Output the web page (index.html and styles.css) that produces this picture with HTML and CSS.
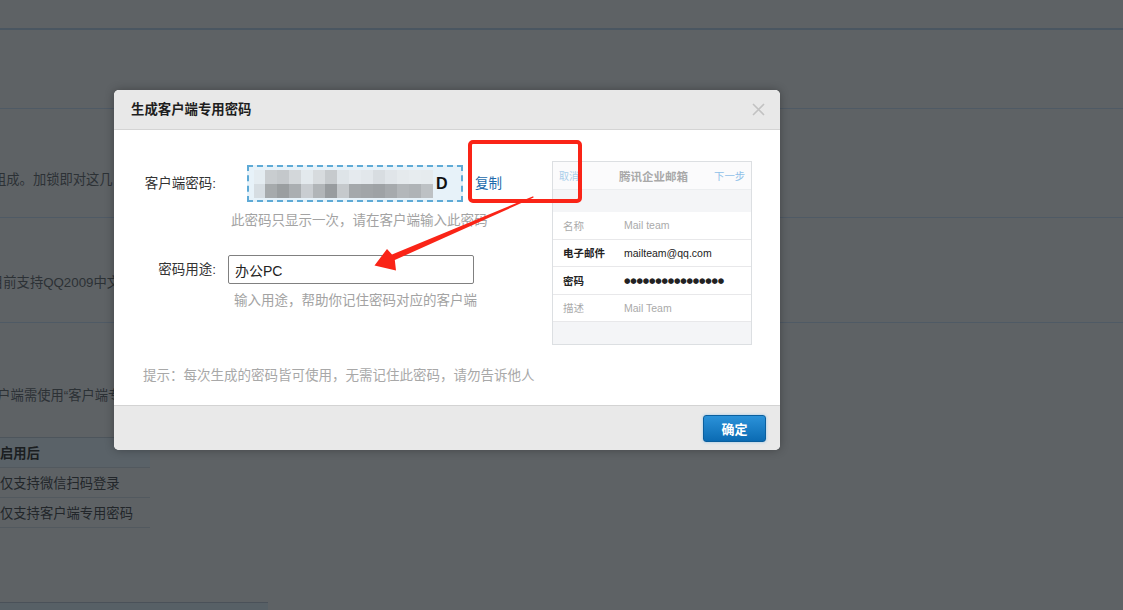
FILE: index.html
```html
<!DOCTYPE html>
<html lang="zh-CN">
<head>
<meta charset="utf-8">
<title>生成客户端专用密码</title>
<link rel="stylesheet" href="styles.css">
</head>
<body>
<div class="page">
  <div class="topbar"></div>
  <section class="sec sec1"></section>
  <section class="sec sec2"><p class="bgtext t1">组成。加锁即对这几</p></section>
  <section class="sec sec3"><p class="bgtext t2">目前支持QQ2009中文</p></section>
  <section class="sec4">
    <p class="bgtext t3">客户端需使用“客户端专</p>
    <div class="tbl">
      <div class="tr th">启用后</div>
      <div class="tr">仅支持微信扫码登录</div>
      <div class="tr">仅支持客户端专用密码</div>
    </div>
    <div class="pagebar"></div>
  </section>
</div>

<div class="dialog">
  <div class="dlg-head">
    <span class="dlg-title">生成客户端专用密码</span>
    <svg class="dlg-close" width="13" height="13" viewBox="0 0 13 13"><path d="M1 1L12 12M12 1L1 12" stroke="#c2c2c2" stroke-width="1.6" fill="none"/></svg>
  </div>
  <div class="dlg-body">
    <div class="form">
      <div class="row row1">
        <span class="lbl">客户端密码:</span>
        <div class="pwd">
          <div class="mosaic">
            <div class="col c0"><i></i><i></i></div>
            <div class="col c1"><i></i><i></i></div>
            <div class="col c2"><i></i><i></i></div>
            <div class="col c3"><i></i><i></i></div>
            <div class="col c4"><i></i><i></i></div>
            <div class="col c5"><i></i><i></i></div>
            <div class="col c6"><i></i><i></i></div>
            <div class="col c7"><i></i><i></i></div>
            <div class="col c8"><i></i><i></i></div>
            <div class="col c9"><i></i><i></i></div>
            <div class="col c10"><i></i><i></i></div>
            <div class="col c11"><i></i><i></i></div>
            <div class="col c12"><i></i><i></i></div>
            <div class="col c13"><i></i><i></i></div>
            <div class="col c14"><i></i><i></i></div>
          </div>
          <span class="pwd-tail">D</span>
        </div>
        <a class="copy">复制</a>
      </div>
      <p class="hint hint1">此密码只显示一次，请在客户端输入此密码</p>
      <div class="row row2">
        <span class="lbl">密码用途:</span>
        <input class="use" type="text" value="办公PC">
      </div>
      <p class="hint hint2">输入用途，帮助你记住密码对应的客户端</p>
      <p class="hint tip">提示：每次生成的密码皆可使用，无需记住此密码，请勿告诉他人</p>
    </div>
    <div class="phone">
      <div class="ph-head">
        <span class="ph-cancel">取消</span>
        <span class="ph-title">腾讯企业邮箱</span>
        <span class="ph-next">下一步</span>
      </div>
      <div class="ph-gap"></div>
      <div class="ph-row muted"><span class="ph-k">名称</span><span class="ph-v">Mail team</span></div>
      <div class="ph-row"><span class="ph-k strong">电子邮件</span><span class="ph-v">mailteam@qq.com</span></div>
      <div class="ph-row"><span class="ph-k strong">密码</span><span class="ph-v dots">●●●●●●●●●●●●●●●●</span></div>
      <div class="ph-row muted"><span class="ph-k">描述</span><span class="ph-v">Mail Team</span></div>
    </div>
  </div>
  <div class="dlg-foot">
    <button class="ok" type="button">确定</button>
  </div>
</div>

<div class="mark-box"></div>
<svg class="mark-arrow" width="1123" height="610" viewBox="0 0 1123 610">
  <polygon points="533.6,197.6 394.8,260 396,270.5 374.5,265.5 387,249 392,254.4 533.2,196.2" fill="#fa2417"/>
</svg>
</body>
</html>
```

FILE: styles.css
```css
html, body {
  margin: 0;
  padding: 0;
}
body {
  width: 1123px;
  height: 610px;
  overflow: hidden;
  position: relative;
  background: #5e6265;
  font-family: "Liberation Sans", "Noto Sans CJK SC", sans-serif;
}

/* dimmed page behind the modal */
.page {
  width: 1123px;
}
.topbar {
  height: 28px;
  border-bottom: 2px solid #4a5661;
}
.sec {
  box-sizing: border-box;
  border-bottom: 1px solid #4f5a65;
}
.sec1 { height: 79px; }
.sec2 { height: 109px; padding-top: 61px; }
.sec3 { height: 105px; padding-top: 55px; }
.sec4 { padding-top: 63px; }
.bgtext {
  margin: 0;
  font-size: 13.3px;
  line-height: 20px;
  color: #2c3135;
  white-space: nowrap;
}
.t1 { margin-left: -7px; }
.t2 { margin-left: -10px; }
.t3 { margin-left: -16px; }
.tbl {
  width: 150px;
  margin-top: 31px;
}
.tr {
  box-sizing: border-box;
  height: 30px;
  display: flex;
  align-items: center;
  border-bottom: 1px solid #52595f;
  font-size: 13.3px;
  color: #22262a;
  white-space: nowrap;
}
.th {
  height: 31px;
  border-top: 1px solid #4d555c;
  background: #5a6268;
  font-weight: bold;
  color: #1b1e21;
}
.pagebar {
  width: 268px;
  height: 10px;
  margin-top: 74px;
  border-top: 1px solid #4a5159;
  background: #576066;
}

/* modal */
.dialog {
  position: absolute;
  left: 114px;
  top: 90px;
  width: 666px;
  height: 360px;
  background: #fff;
  border-radius: 5px;
  overflow: hidden;
  box-shadow: 0 0 10px rgba(0, 0, 0, 0.3);
  display: flex;
  flex-direction: column;
}
.dlg-head {
  height: 39px;
  flex: none;
  background: #e8e8e8;
  border-bottom: 1px solid #d4d4d4;
  display: flex;
  align-items: center;
  justify-content: space-between;
  padding: 0 15px 0 17px;
}
.dlg-title {
  font-size: 13.4px;
  font-weight: bold;
  color: #1e1e1e;
  line-height: 20px;
}
.dlg-close {
  display: block;
}
.dlg-body {
  height: 275px;
  flex: none;
  display: flex;
}
.form {
  width: 438px;
  flex: none;
}
.row {
  display: flex;
  align-items: center;
}
.lbl {
  width: 102px;
  flex: none;
  text-align: right;
  font-size: 13.5px;
  line-height: 20px;
  color: #333;
  white-space: nowrap;
}
.row1 {
  margin-top: 35px;
  height: 37px;
}
.pwd {
  box-sizing: border-box;
  margin-left: 31px;
  width: 216px;
  height: 37px;
  border: 2px dashed #5eaad6;
  background: #e7f2f9;
  display: flex;
  align-items: center;
  padding-left: 5px;
}
.mosaic {
  display: flex;
  height: 28px;
  align-items: stretch;
}
.col {
  width: 12px;
  display: flex;
  flex-direction: column;
}
.col i {
  display: block;
  flex: 1;
}
.c0 { width: 11px; }
.c0 i:first-child { background: #e4ecf1; }
.c0 i:last-child { background: #d6dde2; }
.c1 i:first-child { background: #c9cdd0; }
.c1 i:last-child { background: #a6aaac; }
.c2 i:first-child { background: #c4c8cb; }
.c2 i:last-child { background: #9a9ea0; }
.c3 i:first-child { background: #d3d7da; }
.c3 i:last-child { background: #aaaeb1; }
.c4 i:first-child { background: #e3e9ed; }
.c4 i:last-child { background: #c9cdd1; }
.c5 i:first-child { background: #d7dbde; }
.c5 i:last-child { background: #b1b5b8; }
.c6 i:first-child { background: #c6cacd; }
.c6 i:last-child { background: #989c9f; }
.c7 i:first-child { background: #dee4e8; }
.c7 i:last-child { background: #c5c9cc; }
.c8 i:first-child { background: #e5eaee; }
.c8 i:last-child { background: #a4a8ab; }
.c9 i:first-child { background: #e2e7eb; }
.c9 i:last-child { background: #a1a5a8; }
.c10 i:first-child { background: #d8dde1; }
.c10 i:last-child { background: #9ea2a5; }
.c11 i:first-child { background: #e0e5e9; }
.c11 i:last-child { background: #a6aaad; }
.c12 i:first-child { background: #e5eaed; }
.c12 i:last-child { background: #b3b7ba; }
.c13 i:first-child { background: #e7ecef; }
.c13 i:last-child { background: #afb3b6; }
.c14 i:first-child { background: #e6ebee; }
.c14 i:last-child { background: #bdc1c4; }
.pwd-tail {
  margin-left: 3px;
  font-size: 16px;
  font-weight: bold;
  color: #111;
  line-height: 20px;
}
.copy {
  margin-left: 12px;
  font-size: 13.5px;
  line-height: 20px;
  color: #1b6aab;
  cursor: pointer;
}
.hint {
  margin: 0;
  font-size: 13.5px;
  line-height: 20px;
  color: #a3a3a3;
  white-space: nowrap;
}
.hint1 {
  margin-top: 9px;
  margin-left: 117px;
}
.row2 {
  margin-top: 24px;
  height: 29px;
}
.use {
  box-sizing: border-box;
  margin: 0 0 0 12px;
  width: 246px;
  height: 29px;
  border: 1px solid #808080;
  border-radius: 2px;
  padding: 0 6px;
  font-family: "Liberation Sans", "Noto Sans CJK SC", sans-serif;
  font-size: 14px;
  color: #222;
  background: #fff;
  outline: none;
}
.hint2 {
  margin-top: 7px;
  margin-left: 120px;
}
.tip {
  margin-top: 55px;
  margin-left: 29px;
  color: #a8a8a8;
}

/* phone preview */
.phone {
  box-sizing: border-box;
  margin-top: 31px;
  width: 200px;
  height: 184px;
  border: 1px solid #dcdfe2;
  background: #f4f5f7;
  display: flex;
  flex-direction: column;
}
.ph-head {
  height: 27px;
  flex: none;
  background: #fbfbfc;
  border-bottom: 1px solid #eceef0;
  display: flex;
  align-items: center;
  justify-content: space-between;
  padding: 0 6px 0 6px;
  font-family: "Noto Sans CJK SC", sans-serif;
}
.ph-cancel {
  font-size: 10px;
  color: #a9cdea;
}
.ph-title {
  font-size: 11.5px;
  font-weight: bold;
  color: #a9a9a9;
  margin-left: 14px;
}
.ph-next {
  font-size: 10.3px;
  color: #8fc0e8;
}
.ph-gap {
  height: 22px;
  flex: none;
}
.ph-row {
  box-sizing: border-box;
  height: 27.5px;
  flex: none;
  background: #fff;
  border-bottom: 1px solid #e8e8ea;
  display: flex;
  align-items: center;
  padding-left: 10px;
  font-size: 10.5px;
  color: #222;
}
.ph-k {
  width: 61px;
  flex: none;
  font-family: "Noto Sans CJK SC", sans-serif;
}
.ph-k.strong {
  font-weight: bold;
}
.ph-v {
  font-size: 10.5px;
}
.muted {
  color: #aaa;
}
.dots {
  font-family: "DejaVu Sans", sans-serif;
  font-size: 7.4px;
  letter-spacing: -0.2px;
  color: #222;
}

/* footer */
.dlg-foot {
  flex: 1;
  background: #e9e9e9;
  border-top: 1px solid #d3d3d3;
  display: flex;
  align-items: center;
  justify-content: flex-end;
  padding-right: 14px;
}
.ok {
  width: 63px;
  height: 27px;
  border: 1px solid #0a5f9e;
  border-radius: 3px;
  background: linear-gradient(#2b92d9, #0b6bb3);
  color: #fff;
  font-family: "Noto Sans CJK SC", sans-serif;
  font-size: 13px;
  font-weight: bold;
  padding: 0;
  box-shadow: 0 0 3px rgba(70, 160, 230, 0.5);
}

/* annotation overlay */
.mark-box {
  position: absolute;
  left: 468px;
  top: 140px;
  width: 114px;
  height: 63px;
  box-sizing: border-box;
  border: 4px solid #fa2417;
  border-radius: 5px;
}
.mark-arrow {
  position: absolute;
  left: 0;
  top: 0;
  pointer-events: none;
}
```
